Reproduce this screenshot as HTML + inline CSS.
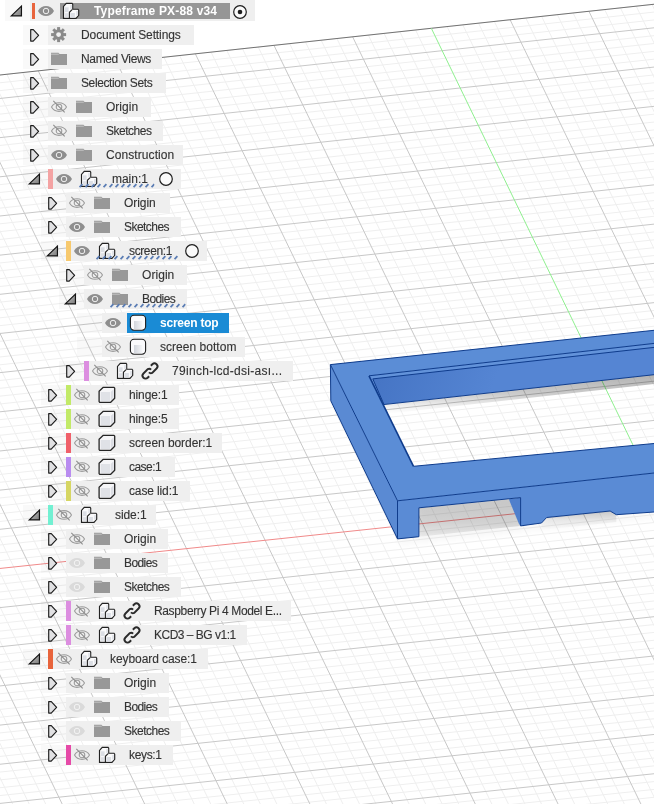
<!DOCTYPE html>
<html><head><meta charset="utf-8"><style>
*{margin:0;padding:0}
html,body{width:654px;height:804px;overflow:hidden;background:#fff}
body{position:relative;font-family:"Liberation Sans",sans-serif}
#scene{position:absolute;left:0;top:0}
.xb{position:absolute;height:20px;background:rgba(0,0,0,0.025)}
.bx{position:absolute;height:20px;background:#efefef}
.rootbox{position:absolute;background:#969696}
.sel{position:absolute;height:19.8px;background:#1a8bd5}
.bar{position:absolute}
.ic{position:absolute;overflow:visible}
.tx{position:absolute;height:20px;line-height:20px;font-size:12px;color:#333;white-space:nowrap;-webkit-text-stroke:0.12px #333;will-change:transform;margin-top:0.4px}
.rt{font-weight:bold;color:#fff;top:0;-webkit-text-stroke:0}
.st{font-weight:bold;color:#fff;-webkit-text-stroke:0}
</style></head><body>

<svg width="0" height="0" style="position:absolute">
<defs>
<linearGradient id="exg" x1="0" y1="0" x2="1" y2="1"><stop offset="0" stop-color="#c4c4c4"/><stop offset="1" stop-color="#7e7e7e"/></linearGradient>
<symbol id="exo" viewBox="0 0 24 24"><path d="M9.3 16.9 L19.45 7.1 L19.45 16.9 Z" fill="url(#exg)" stroke="#141414" stroke-width="1.2" stroke-linejoin="miter"/></symbol>
<symbol id="exc" viewBox="0 0 24 24"><path d="M2.7 6.6 H5.3 L10.6 12.4 L5.2 18.1 H2.7 Z" fill="#e1e1e3" stroke="#1c1c1c" stroke-width="1.15" stroke-linejoin="round"/></symbol>
<symbol id="eyeo" viewBox="0 0 24 24"><path d="M3 12 C6.2 5.4 15.8 5.4 19 12 C15.8 18.6 6.2 18.6 3 12 Z" fill="#8e8e8e"/><circle cx="11" cy="12" r="2.75" fill="none" stroke="#f2f2f2" stroke-width="1"/></symbol>
<symbol id="eyef" viewBox="0 0 24 24"><path d="M3 12 C6.2 5.4 15.8 5.4 19 12 C15.8 18.6 6.2 18.6 3 12 Z" fill="#dadada"/><circle cx="11" cy="12" r="2.75" fill="none" stroke="#f4f4f4" stroke-width="1"/></symbol>
<symbol id="eyeh" viewBox="0 0 24 24"><path d="M3.5 12 C6.6 6.2 15.4 6.2 18.5 12 C15.4 17.8 6.6 17.8 3.5 12 Z" fill="none" stroke="#9c9c9c" stroke-width="1.05"/><circle cx="11" cy="12" r="2.8" fill="none" stroke="#9c9c9c" stroke-width="1.05"/><path d="M5.3 5.9 L16.7 17.4" stroke="#8c8c8c" stroke-width="1.05"/></symbol>
<symbol id="folder" viewBox="0 0 24 24"><path d="M4 5.7 H11.5 L12.6 6.9 H20 V18 H4 Z" fill="#989898"/><path d="M4 7.2 H11.8" stroke="#e4e4e4" stroke-width="0.6"/></symbol>
<symbol id="gear" viewBox="0 0 24 24"><g transform="translate(-0.9 -0.9)"><g fill="#8a8a8a"><circle cx="12.5" cy="12.5" r="5.3"/>
<rect x="11" y="5" width="3" height="15"/><rect x="5" y="11" width="15" height="3"/>
<rect x="11" y="5" width="3" height="15" transform="rotate(45 12.5 12.5)"/><rect x="11" y="5" width="3" height="15" transform="rotate(-45 12.5 12.5)"/></g>
<circle cx="12.5" cy="12.5" r="2.4" fill="#f1f1f1"/></g></symbol>
<symbol id="comp" viewBox="0 0 24 24"><path d="M3.5 19.35 V7.4 L6.25 4.3 H12.1 L12.7 5.2 V10.2 H18 L18.7 11.1 V16.4 L16 19.35 Z" fill="#fafafb" stroke="#222" stroke-width="1.15" stroke-linejoin="miter"/>
<rect x="5" y="8.3" width="3.6" height="4.8" fill="#dcdfe5"/><rect x="5" y="14.2" width="3.6" height="4" fill="#dfe1e6"/><rect x="10.1" y="5.8" width="2" height="4.4" fill="#e3e5ea"/><rect x="10.4" y="14" width="4.5" height="4.6" fill="#dcdfe5"/><rect x="16" y="12" width="2" height="4.4" fill="#e3e5ea"/>
<path d="M9.4 19.35 V13.3 L12.1 10.7" fill="none" stroke="#222" stroke-width="1.1"/></symbol>
<symbol id="cube" viewBox="0 0 24 24"><path d="M3.1 8.2 L7.3 4.3 H18 L18.7 5.2 V15.3 L14.7 19.3 H3.7 L3.1 18.6 Z" fill="#f6f6f8" stroke="#262626" stroke-width="1.3" stroke-linejoin="round"/>
<rect x="4.7" y="9" width="9.3" height="9" fill="#e0e2e7"/><path d="M14.8 9 L17.6 6.2 V14.6 L14.8 17.6 Z" fill="#dcdee4"/></symbol>
<symbol id="body" viewBox="0 0 24 24"><defs><linearGradient id="bdg" x1="0" x2="1"><stop offset="0" stop-color="#d2d5dc"/><stop offset="1" stop-color="#f4f5f7"/></linearGradient></defs><rect x="4.4" y="4.3" width="15.2" height="14.9" rx="3.6" fill="#fafafc" stroke="#1e1e1e" stroke-width="1.1"/><rect x="8" y="10" width="8.3" height="8" fill="url(#bdg)"/></symbol>
<symbol id="link" viewBox="0 0 24 24"><g fill="none" stroke="#2a2a2a" stroke-width="1.9" transform="rotate(-45 12 12)">
<path d="M16.3 8.9 H18.4 A3 3 0 0 1 18.4 14.9 H12.2 A3 3 0 0 1 10.2 12.2"/><path d="M7.7 15.1 H5.6 A3 3 0 0 1 5.6 9.1 H11.8 A3 3 0 0 1 13.8 11.8"/></g></symbol>
<symbol id="rdot" viewBox="0 0 24 24"><circle cx="12" cy="12" r="6.3" fill="#fafafa" stroke="#1e1e1e" stroke-width="1.2"/><circle cx="12" cy="12" r="2.3" fill="#1e1e1e"/></symbol>
<symbol id="rempty" viewBox="0 0 24 24"><circle cx="12" cy="12" r="6.3" fill="#fafafa" stroke="#1e1e1e" stroke-width="1.2"/></symbol>
<pattern id="ulp" width="6" height="5" patternUnits="userSpaceOnUse"><path d="M0.6 4.2 L3.4 1.2" stroke="#5a7cb4" stroke-width="1.8"/></pattern>
</defs></svg>

<svg id="scene" width="654" height="804" viewBox="0 0 654 804">
<defs>
<filter id="blur" x="-20%" y="-20%" width="140%" height="140%"><feGaussianBlur stdDeviation="3"/></filter>
<linearGradient id="wallg" gradientUnits="userSpaceOnUse" x1="370" y1="378" x2="480" y2="420"><stop offset="0" stop-color="#4574c4"/><stop offset="1" stop-color="#5585d3"/></linearGradient>
<linearGradient id="shb" x1="0" y1="0" x2="0" y2="1"><stop offset="0" stop-color="#000" stop-opacity="0.3"/><stop offset="0.5" stop-color="#000" stop-opacity="0.2"/><stop offset="0.8" stop-color="#000" stop-opacity="0.06"/><stop offset="1" stop-color="#000" stop-opacity="0"/></linearGradient>
<linearGradient id="cutg" gradientUnits="userSpaceOnUse" x1="0" y1="500" x2="0" y2="540"><stop offset="0" stop-color="#000" stop-opacity="0.2"/><stop offset="0.55" stop-color="#000" stop-opacity="0.15"/><stop offset="0.85" stop-color="#000" stop-opacity="0.08"/><stop offset="1" stop-color="#000" stop-opacity="0.02"/></linearGradient>
<linearGradient id="notchg" x1="0" y1="0" x2="0" y2="1"><stop offset="0" stop-color="#000" stop-opacity="0.2"/><stop offset="0.5" stop-color="#000" stop-opacity="0.06"/><stop offset="1" stop-color="#000" stop-opacity="0"/></linearGradient>
</defs>
<path d="M-650.78 145.33L-209.68 1060.23M-635.16 143.64L-194.01 1058.59M-619.53 141.95L-178.34 1056.95M-603.91 140.26L-162.67 1055.32M-572.66 136.88L-131.32 1052.04M-557.03 135.19L-115.64 1050.40M-541.40 133.50L-99.96 1048.76M-525.77 131.81L-84.28 1047.12M-494.49 128.43L-52.92 1043.85M-478.86 126.74L-37.23 1042.21M-463.22 125.05L-21.54 1040.57M-447.57 123.36L-5.85 1038.93M-416.28 119.97L25.54 1035.65M-400.64 118.28L41.23 1034.01M-384.99 116.59L56.93 1032.37M-369.34 114.90L72.63 1030.73M-338.03 111.51L104.03 1027.45M-322.37 109.82L119.74 1025.81M-306.71 108.12L135.45 1024.16M-291.05 106.43L151.16 1022.52M-259.72 103.04L182.58 1019.24M-244.06 101.35L198.29 1017.60M-228.39 99.65L214.01 1015.95M-212.72 97.96L229.73 1014.31M-181.37 94.57L261.17 1011.03M-165.70 92.88L276.89 1009.38M-150.02 91.18L292.62 1007.74M-134.34 89.49L308.35 1006.10M-102.98 86.09L339.81 1002.81M-87.29 84.40L355.54 1001.17M-71.61 82.70L371.28 999.52M-55.92 81.01L387.01 997.88M-24.54 77.61L418.49 994.59M-8.84 75.92L434.24 992.94M6.85 74.22L449.98 991.30M22.55 72.52L465.73 989.65M53.95 69.13L497.22 986.36M69.66 67.43L512.98 984.71M85.36 65.73L528.73 983.07M101.07 64.03L544.49 981.42M132.49 60.63L576.00 978.13M148.20 58.93L591.76 976.48M163.91 57.23L607.53 974.83M179.63 55.54L623.29 973.19M211.07 52.14L654.83 969.89M226.79 50.44L670.60 968.24M242.51 48.74L686.37 966.60M258.24 47.04L702.14 964.95M289.70 43.63L733.70 961.65M305.43 41.93L749.48 960.00M321.16 40.23L765.26 958.35M336.90 38.53L781.04 956.70M368.37 35.13L812.62 953.40M384.11 33.42L828.41 951.75M399.86 31.72L844.20 950.10M415.60 30.02L859.99 948.45M447.09 26.61L891.58 945.15M462.84 24.91L907.38 943.50M478.60 23.21L923.18 941.85M494.35 21.50L938.98 940.20M525.86 18.10L970.59 936.90M541.62 16.39L986.40 935.24M557.38 14.69L1002.21 933.59M573.15 12.98L1018.02 931.94M604.68 9.57L1049.65 928.63M620.45 7.87L1065.47 926.98M636.22 6.16L1081.29 925.33M651.99 4.46L1097.11 923.68M683.54 1.05L1128.76 920.37M699.32 -0.66L1144.59 918.71M715.10 -2.36L1160.41 917.06M730.88 -4.07L1176.25 915.41M762.45 -7.48L1207.91 912.10M778.24 -9.19L1223.75 910.44M794.02 -10.90L1239.59 908.79M809.82 -12.61L1255.43 907.13M-228.94 1054.42L1267.64 897.99M-232.53 1046.97L1264.01 890.50M-236.12 1039.52L1260.38 883.01M-239.71 1032.07L1256.76 875.52M-246.89 1017.18L1249.50 860.55M-250.48 1009.73L1245.87 853.06M-254.07 1002.28L1242.24 845.57M-257.66 994.84L1238.62 838.09M-264.84 979.94L1231.36 823.11M-268.43 972.50L1227.73 815.63M-272.02 965.05L1224.11 808.14M-275.61 957.61L1220.48 800.65M-282.79 942.71L1213.22 785.68M-286.38 935.27L1209.60 778.20M-289.97 927.82L1205.97 770.71M-293.56 920.38L1202.34 763.22M-300.74 905.49L1195.09 748.25M-304.32 898.04L1191.46 740.77M-307.91 890.60L1187.84 733.28M-311.50 883.16L1184.21 725.80M-318.68 868.27L1176.96 710.83M-322.27 860.82L1173.33 703.35M-325.86 853.38L1169.71 695.86M-329.45 845.94L1166.08 688.38M-336.62 831.05L1158.83 673.41M-340.21 823.61L1155.20 665.93M-343.80 816.16L1151.58 658.45M-347.39 808.72L1147.95 650.96M-354.56 793.84L1140.70 636.00M-358.15 786.40L1137.08 628.52M-361.74 778.95L1133.45 621.03M-365.33 771.51L1129.82 613.55M-372.50 756.63L1122.57 598.59M-376.09 749.19L1118.95 591.11M-379.68 741.75L1115.33 583.63M-383.26 734.31L1111.70 576.15M-390.44 719.42L1104.45 561.18M-394.02 711.98L1100.83 553.70M-397.61 704.54L1097.20 546.22M-401.20 697.10L1093.58 538.74M-408.37 682.22L1086.33 523.78M-411.96 674.78L1082.71 516.30M-415.54 667.35L1079.08 508.82M-419.13 659.91L1075.46 501.34M-426.30 645.03L1068.21 486.39M-429.89 637.59L1064.59 478.91M-433.48 630.15L1060.96 471.43M-437.06 622.71L1057.34 463.95M-444.23 607.84L1050.09 448.99M-447.82 600.40L1046.47 441.52M-451.40 592.96L1042.85 434.04M-454.99 585.52L1039.22 426.56M-462.16 570.65L1031.98 411.61M-465.75 563.21L1028.35 404.13M-469.33 555.78L1024.73 396.65M-472.92 548.34L1021.11 389.17M-480.09 533.47L1013.86 374.22M-483.67 526.03L1010.24 366.75M-487.26 518.59L1006.62 359.27M-490.84 511.16L1003.00 351.79M-498.01 496.29L995.75 336.84M-501.60 488.85L992.13 329.37M-505.18 481.42L988.51 321.89M-508.76 473.98L984.89 314.42M-515.93 459.11L977.64 299.47M-519.52 451.68L974.02 291.99M-523.10 444.25L970.40 284.52M-526.68 436.81L966.78 277.04M-533.85 421.94L959.54 262.10M-537.44 414.51L955.92 254.62M-541.02 407.08L952.29 247.15M-544.60 399.64L948.67 239.68M-551.77 384.78L941.43 224.73M-555.35 377.34L937.81 217.26M-558.94 369.91L934.19 209.78M-562.52 362.48L930.57 202.31M-569.69 347.62L923.33 187.37M-573.27 340.18L919.71 179.90M-576.85 332.75L916.09 172.42M-580.43 325.32L912.47 164.95M-587.60 310.46L905.23 150.01M-591.18 303.03L901.61 142.54M-594.76 295.60L897.99 135.07M-598.35 288.17L894.37 127.60M-605.51 273.31L887.13 112.66M-609.09 265.88L883.51 105.19M-612.67 258.45L879.89 97.72M-616.26 251.02L876.27 90.25M-623.42 236.16L869.03 75.31M-627.00 228.73L865.41 67.84M-630.58 221.30L861.79 60.37M-634.16 213.87L858.18 52.90M-641.33 199.01L850.94 37.96M-644.91 191.58L847.32 30.49M-648.49 184.15L843.70 23.02M-652.07 176.73L840.08 15.56M-659.23 161.87L832.85 0.62M-662.81 154.44L829.23 -6.85M-666.39 147.02L825.61 -14.31" stroke="#efefef" stroke-width="1" fill="none" shape-rendering="auto"/>
<path d="M-666.39 147.02L-225.35 1061.87M-588.29 138.57L-147.00 1053.68M-510.13 130.12L-68.60 1045.49M-431.93 121.66L9.84 1037.29M-353.68 113.20L88.33 1029.09M-275.39 104.74L166.87 1020.88M-197.05 96.27L245.45 1012.67M-118.66 87.79L324.08 1004.45M-40.23 79.31L402.75 996.23M38.25 70.82L481.47 988.01M116.78 62.33L560.24 979.78M195.35 53.84L639.06 971.54M273.97 45.33L717.92 963.30M352.63 36.83L796.83 955.05M510.11 19.80L954.79 938.55M588.91 11.28L1033.84 930.29M667.76 2.75L1112.93 922.02M746.66 -5.78L1192.08 913.75M-225.35 1061.87L1271.27 905.48M-243.30 1024.63L1253.13 868.04M-261.25 987.39L1234.99 830.60M-279.20 950.16L1216.85 793.17M-297.15 912.93L1198.72 755.74M-315.09 875.71L1180.58 718.32M-333.03 838.49L1162.45 680.90M-350.97 801.28L1144.33 643.48M-368.91 764.07L1126.20 606.07M-386.85 726.86L1108.08 568.66M-404.78 689.66L1089.95 531.26M-422.72 652.47L1071.83 493.87M-458.58 578.09L1035.60 419.08M-476.50 540.90L1017.49 381.70M-494.43 503.72L999.37 344.32M-512.35 466.55L981.27 306.94M-530.27 429.38L963.16 269.57M-548.19 392.21L945.05 232.20M-566.10 355.05L926.95 194.84M-584.02 317.89L908.85 157.48M-601.93 280.74L890.75 120.13M-619.84 243.59L872.65 82.78M-637.75 206.44L854.56 45.43M-655.65 169.30L836.46 8.09" stroke="#c8c8c8" stroke-width="1" fill="none" shape-rendering="auto"/>
<path d="M-666.39 147.02L825.61 -14.31" stroke="#727272" stroke-width="1.1" fill="none"/>
<path d="M-440.65 615.28L658.83 498.44" stroke="#f08a8a" stroke-width="1" fill="none"/>
<path d="M431.35 28.32L658.83 498.44" stroke="#8fef8f" stroke-width="1" fill="none"/>
<path d="M330 401 L397 539 L419 537 L419 508 L521 498 L521 526 L541 523 L547 517 L610 511 L616 515 L654 512 L654 518 L400 545 Z" fill="#000" opacity="0.03" filter="url(#blur)"/>
<path d="M369 375.8 L654 343.4 L654 374.7 L383.3 404.6 Z" fill="url(#wallg)"/>
<path d="M369 375.8 L654 343.4 L654 347.4 L372.8 378.9 Z" fill="#6393da"/>
<path d="M369 375.8 L372.8 378.9 L384 404.5 L383.3 404.6 Z" fill="#6c9be0"/>
<path d="M383.3 404.6 L654 374.7 L654 384 L387.8 413.8 Z" fill="url(#shb)"/>
<path d="M419 508 L509 499.3 L520.6 526 L419 536.7 Z" fill="url(#cutg)"/>
<path d="M508.8 499.3 L520.6 497.6 L520.6 526 L519 524 Z" fill="#4f7fcc"/>
<path d="M541.5 523 L547 517.5 L610 511 L616.3 514.7 L616.3 522 L541.5 530 Z" fill="url(#notchg)"/>
<path d="M330.4 364.6 L654 330.3 L654 473 L397.5 500.8 Z M369 375.8 L413.5 466.3 L654 443.5 L654 343.4 Z" fill="#5b8dd6" fill-rule="evenodd"/>
<path d="M330.4 364.6 L397.5 500.8 L397.5 538.9 L330.8 400.8 Z" fill="#5a8ad3"/>
<path d="M397.5 500.8 L654 473 L654 512 L616.3 514.7 L610.1 511 L546.6 517.5 L541.5 523 L520.6 525.9 L520.6 497.6 L418.9 507.8 L418.9 536.7 L397.5 538.9 Z" fill="#5a8bd5"/>
<path d="M369 375.8 L413.5 466.3" stroke="#0f3c8c" stroke-width="1.6" fill="none"/>
<path d="M330.4 364.6 L654 330.3 M330.4 364.6 L397.5 500.8 M397.5 500.8 L654 473 M397.5 500.8 L397.5 538.9 M330.8 400.8 L397.5 538.9 L418.9 536.7 L418.9 507.8 L520.6 497.6 L520.6 525.9 L541.5 523 L546.6 517.5 L610.1 511 L616.3 514.7 L654 512 M330.4 364.6 L330.8 400.8 M369 375.8 L654 343.4 M372.8 378.9 L654 347.4 M372.8 378.9 L384 404.5 M383.3 404.6 L654 374.7 M413.5 466.3 L654 443.5" stroke="#0f3c8c" stroke-width="1" fill="none" stroke-linejoin="round"/>
</svg>
<div class="xb" style="left:5px;top:0px;width:25px;height:21px"></div>
<div class="bx" style="left:30px;top:0px;width:225.0px;height:21px"></div>
<svg class="ic" style="left:2.00px;top:-1.00px" width="24" height="24"><use href="#exo"/></svg>
<div class="bar" style="left:32px;top:3px;width:3px;height:16px;background:#e8643c"></div>
<svg class="ic" style="left:35.00px;top:-1.00px" width="24" height="24"><use href="#eyeo"/></svg>
<div class="rootbox" style="left:60px;top:3px;width:170px;height:15.6px"></div>
<svg class="ic" style="left:60.00px;top:-1.00px" width="24" height="24"><use href="#comp"/></svg>
<div class="tx rt" style="left:94px;top:1px;letter-spacing:0.177px">Typeframe PX-88 v34</div>
<svg class="ic" style="left:228.40px;top:-0.50px" width="24" height="24"><use href="#rdot"/></svg>
<div class="xb" style="left:23px;top:25px;width:25px"></div>
<div class="bx" style="left:48px;top:25px;width:145.9px"></div>
<svg class="ic" style="left:28.00px;top:23.00px" width="24" height="24"><use href="#exc"/></svg>
<svg class="ic" style="left:47.00px;top:23.00px" width="24" height="24"><use href="#gear"/></svg>
<div class="tx" style="left:81.3px;top:25px;letter-spacing:-0.097px">Document Settings</div>
<div class="xb" style="left:23px;top:49px;width:25px"></div>
<div class="bx" style="left:48px;top:49px;width:114.2px"></div>
<svg class="ic" style="left:28.00px;top:47.00px" width="24" height="24"><use href="#exc"/></svg>
<svg class="ic" style="left:47.00px;top:47.00px" width="24" height="24"><use href="#folder"/></svg>
<div class="tx" style="left:81.3px;top:49px;letter-spacing:-0.351px">Named Views</div>
<div class="xb" style="left:23px;top:73px;width:25px"></div>
<div class="bx" style="left:48px;top:73px;width:117.5px"></div>
<svg class="ic" style="left:28.00px;top:71.00px" width="24" height="24"><use href="#exc"/></svg>
<svg class="ic" style="left:47.00px;top:71.00px" width="24" height="24"><use href="#folder"/></svg>
<div class="tx" style="left:81.3px;top:73px;letter-spacing:-0.391px">Selection Sets</div>
<div class="xb" style="left:23px;top:97px;width:25px"></div>
<div class="bx" style="left:48px;top:97px;width:103.0px"></div>
<svg class="ic" style="left:28.00px;top:95.00px" width="24" height="24"><use href="#exc"/></svg>
<svg class="ic" style="left:48.00px;top:95.00px" width="24" height="24"><use href="#eyeh"/></svg>
<svg class="ic" style="left:72.00px;top:95.00px" width="24" height="24"><use href="#folder"/></svg>
<div class="tx" style="left:106.1px;top:97px;letter-spacing:0.017px">Origin</div>
<div class="xb" style="left:23px;top:121px;width:25px"></div>
<div class="bx" style="left:48px;top:121px;width:114.5px"></div>
<svg class="ic" style="left:28.00px;top:119.00px" width="24" height="24"><use href="#exc"/></svg>
<svg class="ic" style="left:48.00px;top:119.00px" width="24" height="24"><use href="#eyeh"/></svg>
<svg class="ic" style="left:72.00px;top:119.00px" width="24" height="24"><use href="#folder"/></svg>
<div class="tx" style="left:106.1px;top:121px;letter-spacing:-0.492px">Sketches</div>
<div class="xb" style="left:23px;top:145px;width:25px"></div>
<div class="bx" style="left:48px;top:145px;width:135.1px"></div>
<svg class="ic" style="left:28.00px;top:143.00px" width="24" height="24"><use href="#exc"/></svg>
<svg class="ic" style="left:48.00px;top:143.00px" width="24" height="24"><use href="#eyeo"/></svg>
<svg class="ic" style="left:72.00px;top:143.00px" width="24" height="24"><use href="#folder"/></svg>
<div class="tx" style="left:106.1px;top:145px;letter-spacing:0.076px">Construction</div>
<div class="xb" style="left:23px;top:169px;width:25px"></div>
<div class="bx" style="left:48px;top:169px;width:132.5px"></div>
<svg class="ic" style="left:20.00px;top:167.00px" width="24" height="24"><use href="#exo"/></svg>
<div class="bar" style="left:48px;top:169px;width:4.5px;height:20px;background:#f4a3a3"></div>
<svg class="ic" style="left:53.00px;top:167.00px" width="24" height="24"><use href="#eyeo"/></svg>
<svg class="ic" style="left:78.00px;top:167.00px" width="24" height="24"><use href="#comp"/></svg>
<svg class="ic" style="left:78.5px;top:183px" width="75.4" height="5"><rect width="100%" height="5" fill="url(#ulp)"/></svg>
<div class="tx" style="left:111.5px;top:169px;letter-spacing:-0.023px">main:1</div>
<svg class="ic" style="left:154.35px;top:167.00px" width="24" height="24"><use href="#rempty"/></svg>
<div class="xb" style="left:41px;top:193px;width:25px"></div>
<div class="bx" style="left:66px;top:193px;width:103.6px"></div>
<svg class="ic" style="left:46.00px;top:191.00px" width="24" height="24"><use href="#exc"/></svg>
<svg class="ic" style="left:66.00px;top:191.00px" width="24" height="24"><use href="#eyeh"/></svg>
<svg class="ic" style="left:90.00px;top:191.00px" width="24" height="24"><use href="#folder"/></svg>
<div class="tx" style="left:124.2px;top:193px;letter-spacing:-0.043px">Origin</div>
<div class="xb" style="left:41px;top:217px;width:25px"></div>
<div class="bx" style="left:66px;top:217px;width:115.0px"></div>
<svg class="ic" style="left:46.00px;top:215.00px" width="24" height="24"><use href="#exc"/></svg>
<svg class="ic" style="left:66.00px;top:215.00px" width="24" height="24"><use href="#eyeo"/></svg>
<svg class="ic" style="left:90.00px;top:215.00px" width="24" height="24"><use href="#folder"/></svg>
<div class="tx" style="left:124.2px;top:217px;letter-spacing:-0.535px">Sketches</div>
<div class="xb" style="left:41px;top:241px;width:25px"></div>
<div class="bx" style="left:66px;top:241px;width:141.3px"></div>
<svg class="ic" style="left:38.00px;top:239.00px" width="24" height="24"><use href="#exo"/></svg>
<div class="bar" style="left:66px;top:241px;width:4.5px;height:20px;background:#f7c96e"></div>
<svg class="ic" style="left:71.00px;top:239.00px" width="24" height="24"><use href="#eyeo"/></svg>
<svg class="ic" style="left:96.00px;top:239.00px" width="24" height="24"><use href="#comp"/></svg>
<svg class="ic" style="left:95.7px;top:255px" width="82.6" height="5"><rect width="100%" height="5" fill="url(#ulp)"/></svg>
<div class="tx" style="left:129.4px;top:241px;letter-spacing:-0.374px">screen:1</div>
<svg class="ic" style="left:180.40px;top:239.00px" width="24" height="24"><use href="#rempty"/></svg>
<div class="xb" style="left:59px;top:265px;width:25px"></div>
<div class="bx" style="left:84px;top:265px;width:103.1px"></div>
<svg class="ic" style="left:64.00px;top:263.00px" width="24" height="24"><use href="#exc"/></svg>
<svg class="ic" style="left:84.00px;top:263.00px" width="24" height="24"><use href="#eyeh"/></svg>
<svg class="ic" style="left:108.00px;top:263.00px" width="24" height="24"><use href="#folder"/></svg>
<div class="tx" style="left:142px;top:265px;letter-spacing:0.057px">Origin</div>
<div class="xb" style="left:59px;top:289px;width:25px"></div>
<div class="bx" style="left:84px;top:289px;width:103.4px"></div>
<svg class="ic" style="left:56.00px;top:287.00px" width="24" height="24"><use href="#exo"/></svg>
<svg class="ic" style="left:84.00px;top:287.00px" width="24" height="24"><use href="#eyeo"/></svg>
<svg class="ic" style="left:108.00px;top:287.00px" width="24" height="24"><use href="#folder"/></svg>
<svg class="ic" style="left:109.6px;top:303px" width="75.7" height="5"><rect width="100%" height="5" fill="url(#ulp)"/></svg>
<div class="tx" style="left:142.4px;top:289px;letter-spacing:-0.598px">Bodies</div>
<div class="xb" style="left:77px;top:313px;width:25px"></div>
<div class="bx" style="left:102px;top:313px;width:25px"></div>
<svg class="ic" style="left:102.00px;top:311.00px" width="24" height="24"><use href="#eyeo"/></svg>
<div class="sel" style="left:127px;top:313px;width:102.0px"></div>
<svg class="ic" style="left:126.00px;top:311.00px" width="24" height="24"><use href="#body"/></svg>
<div class="tx st" style="left:160.4px;top:313px;letter-spacing:-0.230px">screen top</div>
<div class="xb" style="left:77px;top:337px;width:25px"></div>
<div class="bx" style="left:102px;top:337px;width:142.7px"></div>
<svg class="ic" style="left:102.00px;top:335.00px" width="24" height="24"><use href="#eyeh"/></svg>
<svg class="ic" style="left:126.00px;top:335.00px" width="24" height="24"><use href="#body"/></svg>
<div class="tx" style="left:160.1px;top:337px;letter-spacing:0.032px">screen bottom</div>
<div class="xb" style="left:59px;top:361px;width:25px"></div>
<div class="bx" style="left:84px;top:361px;width:209.2px"></div>
<svg class="ic" style="left:64.00px;top:359.00px" width="24" height="24"><use href="#exc"/></svg>
<div class="bar" style="left:84px;top:361px;width:4.5px;height:20px;background:#dc8ee0"></div>
<svg class="ic" style="left:89.00px;top:359.00px" width="24" height="24"><use href="#eyeh"/></svg>
<svg class="ic" style="left:114.00px;top:359.00px" width="24" height="24"><use href="#comp"/></svg>
<svg class="ic" style="left:138.00px;top:359.00px" width="24" height="24"><use href="#link"/></svg>
<div class="tx" style="left:172.3px;top:361px;letter-spacing:0.298px">79inch-lcd-dsi-ası...</div>
<div class="xb" style="left:41px;top:385px;width:25px"></div>
<div class="bx" style="left:66px;top:385px;width:112.6px"></div>
<svg class="ic" style="left:46.00px;top:383.00px" width="24" height="24"><use href="#exc"/></svg>
<div class="bar" style="left:66px;top:385px;width:4.5px;height:20px;background:#c2ea68"></div>
<svg class="ic" style="left:71.00px;top:383.00px" width="24" height="24"><use href="#eyeh"/></svg>
<svg class="ic" style="left:96.00px;top:383.00px" width="24" height="24"><use href="#cube"/></svg>
<div class="tx" style="left:129.3px;top:385px;letter-spacing:-0.110px">hinge:1</div>
<div class="xb" style="left:41px;top:409px;width:25px"></div>
<div class="bx" style="left:66px;top:409px;width:112.5px"></div>
<svg class="ic" style="left:46.00px;top:407.00px" width="24" height="24"><use href="#exc"/></svg>
<div class="bar" style="left:66px;top:409px;width:4.5px;height:20px;background:#c2ea68"></div>
<svg class="ic" style="left:71.00px;top:407.00px" width="24" height="24"><use href="#eyeh"/></svg>
<svg class="ic" style="left:96.00px;top:407.00px" width="24" height="24"><use href="#cube"/></svg>
<div class="tx" style="left:129.3px;top:409px;letter-spacing:-0.110px">hinge:5</div>
<div class="xb" style="left:41px;top:433px;width:25px"></div>
<div class="bx" style="left:66px;top:433px;width:156.3px"></div>
<svg class="ic" style="left:46.00px;top:431.00px" width="24" height="24"><use href="#exc"/></svg>
<div class="bar" style="left:66px;top:433px;width:4.5px;height:20px;background:#f0606a"></div>
<svg class="ic" style="left:71.00px;top:431.00px" width="24" height="24"><use href="#eyeh"/></svg>
<svg class="ic" style="left:96.00px;top:431.00px" width="24" height="24"><use href="#cube"/></svg>
<div class="tx" style="left:129.3px;top:433px;letter-spacing:-0.067px">screen border:1</div>
<div class="xb" style="left:41px;top:457px;width:25px"></div>
<div class="bx" style="left:66px;top:457px;width:108.5px"></div>
<svg class="ic" style="left:46.00px;top:455.00px" width="24" height="24"><use href="#exc"/></svg>
<div class="bar" style="left:66px;top:457px;width:4.5px;height:20px;background:#b98cf0"></div>
<svg class="ic" style="left:71.00px;top:455.00px" width="24" height="24"><use href="#eyeh"/></svg>
<svg class="ic" style="left:96.00px;top:455.00px" width="24" height="24"><use href="#cube"/></svg>
<div class="tx" style="left:129.3px;top:457px;letter-spacing:-0.529px">case:1</div>
<div class="xb" style="left:41px;top:481px;width:25px"></div>
<div class="bx" style="left:66px;top:481px;width:124.4px"></div>
<svg class="ic" style="left:46.00px;top:479.00px" width="24" height="24"><use href="#exc"/></svg>
<div class="bar" style="left:66px;top:481px;width:4.5px;height:20px;background:#d6d663"></div>
<svg class="ic" style="left:71.00px;top:479.00px" width="24" height="24"><use href="#eyeh"/></svg>
<svg class="ic" style="left:96.00px;top:479.00px" width="24" height="24"><use href="#cube"/></svg>
<div class="tx" style="left:129.3px;top:481px;letter-spacing:-0.132px">case lid:1</div>
<div class="xb" style="left:23px;top:505px;width:25px"></div>
<div class="bx" style="left:48px;top:505px;width:107.8px"></div>
<svg class="ic" style="left:20.00px;top:503.00px" width="24" height="24"><use href="#exo"/></svg>
<div class="bar" style="left:48px;top:505px;width:4.5px;height:20px;background:#72f0d2"></div>
<svg class="ic" style="left:53.00px;top:503.00px" width="24" height="24"><use href="#eyeh"/></svg>
<svg class="ic" style="left:78.00px;top:503.00px" width="24" height="24"><use href="#comp"/></svg>
<div class="tx" style="left:114.5px;top:505px;letter-spacing:-0.083px">side:1</div>
<div class="xb" style="left:41px;top:529px;width:25px"></div>
<div class="bx" style="left:66px;top:529px;width:102.2px"></div>
<svg class="ic" style="left:46.00px;top:527.00px" width="24" height="24"><use href="#exc"/></svg>
<svg class="ic" style="left:66.00px;top:527.00px" width="24" height="24"><use href="#eyeh"/></svg>
<svg class="ic" style="left:90.00px;top:527.00px" width="24" height="24"><use href="#folder"/></svg>
<div class="tx" style="left:124px;top:529px;letter-spacing:0.017px">Origin</div>
<div class="xb" style="left:41px;top:553px;width:25px"></div>
<div class="bx" style="left:66px;top:553px;width:102.2px"></div>
<svg class="ic" style="left:46.00px;top:551.00px" width="24" height="24"><use href="#exc"/></svg>
<svg class="ic" style="left:66.00px;top:551.00px" width="24" height="24"><use href="#eyef"/></svg>
<svg class="ic" style="left:90.00px;top:551.00px" width="24" height="24"><use href="#folder"/></svg>
<div class="tx" style="left:124px;top:553px;letter-spacing:-0.598px">Bodies</div>
<div class="xb" style="left:41px;top:577px;width:25px"></div>
<div class="bx" style="left:66px;top:577px;width:115.0px"></div>
<svg class="ic" style="left:46.00px;top:575.00px" width="24" height="24"><use href="#exc"/></svg>
<svg class="ic" style="left:66.00px;top:575.00px" width="24" height="24"><use href="#eyef"/></svg>
<svg class="ic" style="left:90.00px;top:575.00px" width="24" height="24"><use href="#folder"/></svg>
<div class="tx" style="left:124px;top:577px;letter-spacing:-0.506px">Sketches</div>
<div class="xb" style="left:41px;top:601px;width:25px"></div>
<div class="bx" style="left:66px;top:601px;width:225.0px"></div>
<svg class="ic" style="left:46.00px;top:599.00px" width="24" height="24"><use href="#exc"/></svg>
<div class="bar" style="left:66px;top:601px;width:4.5px;height:20px;background:#dc8ee0"></div>
<svg class="ic" style="left:71.00px;top:599.00px" width="24" height="24"><use href="#eyeh"/></svg>
<svg class="ic" style="left:96.00px;top:599.00px" width="24" height="24"><use href="#comp"/></svg>
<svg class="ic" style="left:120.00px;top:599.00px" width="24" height="24"><use href="#link"/></svg>
<div class="tx" style="left:154px;top:601px;letter-spacing:-0.362px">Raspberry Pi 4 Model E...</div>
<div class="xb" style="left:41px;top:625px;width:25px"></div>
<div class="bx" style="left:66px;top:625px;width:181.4px"></div>
<svg class="ic" style="left:46.00px;top:623.00px" width="24" height="24"><use href="#exc"/></svg>
<div class="bar" style="left:66px;top:625px;width:4.5px;height:20px;background:#dc8ee0"></div>
<svg class="ic" style="left:71.00px;top:623.00px" width="24" height="24"><use href="#eyeh"/></svg>
<svg class="ic" style="left:96.00px;top:623.00px" width="24" height="24"><use href="#comp"/></svg>
<svg class="ic" style="left:120.00px;top:623.00px" width="24" height="24"><use href="#link"/></svg>
<div class="tx" style="left:154px;top:625px;letter-spacing:-0.498px">KCD3 – BG v1:1</div>
<div class="xb" style="left:23px;top:649px;width:25px"></div>
<div class="bx" style="left:48px;top:649px;width:159.8px"></div>
<svg class="ic" style="left:20.00px;top:647.00px" width="24" height="24"><use href="#exo"/></svg>
<div class="bar" style="left:48px;top:649px;width:4.5px;height:20px;background:#e8643c"></div>
<svg class="ic" style="left:53.00px;top:647.00px" width="24" height="24"><use href="#eyeh"/></svg>
<svg class="ic" style="left:78.00px;top:647.00px" width="24" height="24"><use href="#comp"/></svg>
<div class="tx" style="left:110px;top:649px;letter-spacing:-0.074px">keyboard case:1</div>
<div class="xb" style="left:41px;top:673px;width:25px"></div>
<div class="bx" style="left:66px;top:673px;width:103.3px"></div>
<svg class="ic" style="left:46.00px;top:671.00px" width="24" height="24"><use href="#exc"/></svg>
<svg class="ic" style="left:66.00px;top:671.00px" width="24" height="24"><use href="#eyeh"/></svg>
<svg class="ic" style="left:90.00px;top:671.00px" width="24" height="24"><use href="#folder"/></svg>
<div class="tx" style="left:124px;top:673px;letter-spacing:0.017px">Origin</div>
<div class="xb" style="left:41px;top:697px;width:25px"></div>
<div class="bx" style="left:66px;top:697px;width:103.3px"></div>
<svg class="ic" style="left:46.00px;top:695.00px" width="24" height="24"><use href="#exc"/></svg>
<svg class="ic" style="left:66.00px;top:695.00px" width="24" height="24"><use href="#eyef"/></svg>
<svg class="ic" style="left:90.00px;top:695.00px" width="24" height="24"><use href="#folder"/></svg>
<div class="tx" style="left:124px;top:697px;letter-spacing:-0.598px">Bodies</div>
<div class="xb" style="left:41px;top:721px;width:25px"></div>
<div class="bx" style="left:66px;top:721px;width:115.0px"></div>
<svg class="ic" style="left:46.00px;top:719.00px" width="24" height="24"><use href="#exc"/></svg>
<svg class="ic" style="left:66.00px;top:719.00px" width="24" height="24"><use href="#eyef"/></svg>
<svg class="ic" style="left:90.00px;top:719.00px" width="24" height="24"><use href="#folder"/></svg>
<div class="tx" style="left:124px;top:721px;letter-spacing:-0.506px">Sketches</div>
<div class="xb" style="left:41px;top:745px;width:25px"></div>
<div class="bx" style="left:66px;top:745px;width:107.0px"></div>
<svg class="ic" style="left:46.00px;top:743.00px" width="24" height="24"><use href="#exc"/></svg>
<div class="bar" style="left:66px;top:745px;width:4.5px;height:20px;background:#e64aa8"></div>
<svg class="ic" style="left:71.00px;top:743.00px" width="24" height="24"><use href="#eyeh"/></svg>
<svg class="ic" style="left:96.00px;top:743.00px" width="24" height="24"><use href="#comp"/></svg>
<div class="tx" style="left:129.2px;top:745px;letter-spacing:-0.334px">keys:1</div>
</body></html>
